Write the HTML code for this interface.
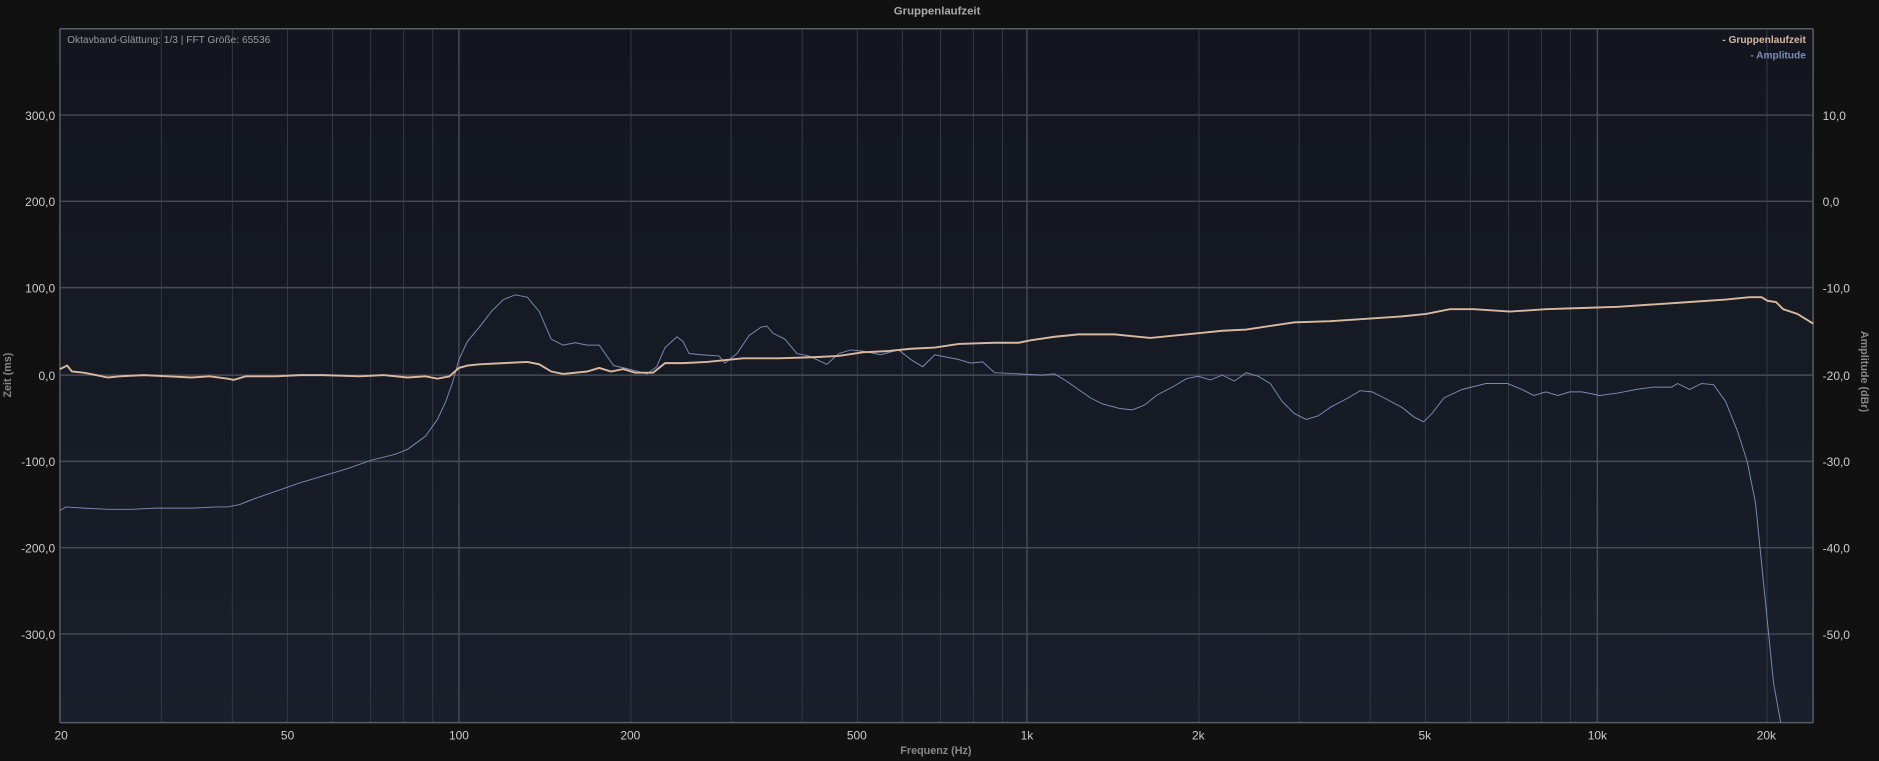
<!DOCTYPE html>
<html><head><meta charset="utf-8"><style>
html,body{margin:0;padding:0;background:#111111;overflow:hidden}
svg{display:block}
text{font-family:"Liberation Sans",sans-serif}
</style></head><body>
<svg width="1879" height="761" viewBox="0 0 1568 635" preserveAspectRatio="none" xmlns="http://www.w3.org/2000/svg">
<defs><linearGradient id="bg" x1="0" y1="0" x2="0" y2="1"><stop offset="0" stop-color="#13161e"/><stop offset="1" stop-color="#1a1f2b"/></linearGradient></defs>
<rect width="1568" height="635" fill="#111111"/>
<rect x="50" y="24" width="1463" height="579" fill="url(#bg)"/>
<g stroke="#343a44" stroke-width="0.8">
<line x1="134.6" y1="24" x2="134.6" y2="603"/><line x1="193.9" y1="24" x2="193.9" y2="603"/><line x1="239.9" y1="24" x2="239.9" y2="603"/><line x1="277.5" y1="24" x2="277.5" y2="603"/><line x1="309.3" y1="24" x2="309.3" y2="603"/><line x1="336.8" y1="24" x2="336.8" y2="603"/><line x1="361.1" y1="24" x2="361.1" y2="603"/>
<line x1="526.5" y1="24" x2="526.5" y2="603"/><line x1="610.1" y1="24" x2="610.1" y2="603"/><line x1="669.4" y1="24" x2="669.4" y2="603"/><line x1="715.4" y1="24" x2="715.4" y2="603"/><line x1="753" y1="24" x2="753" y2="603"/><line x1="784.8" y1="24" x2="784.8" y2="603"/><line x1="812.3" y1="24" x2="812.3" y2="603"/><line x1="836.6" y1="24" x2="836.6" y2="603"/>
<line x1="1000.5" y1="24" x2="1000.5" y2="603"/><line x1="1084.1" y1="24" x2="1084.1" y2="603"/><line x1="1143.4" y1="24" x2="1143.4" y2="603"/><line x1="1189.4" y1="24" x2="1189.4" y2="603"/><line x1="1227" y1="24" x2="1227" y2="603"/><line x1="1258.8" y1="24" x2="1258.8" y2="603"/><line x1="1286.3" y1="24" x2="1286.3" y2="603"/><line x1="1310.6" y1="24" x2="1310.6" y2="603"/>
<line x1="1474.5" y1="24" x2="1474.5" y2="603"/>
</g>
<g stroke="#474c54" stroke-width="1.2">
<line x1="383" y1="24" x2="383" y2="603"/><line x1="857" y1="24" x2="857" y2="603"/><line x1="1333" y1="24" x2="1333" y2="603"/>
<line x1="50" y1="96" x2="1513" y2="96"/><line x1="50" y1="168" x2="1513" y2="168"/><line x1="50" y1="240" x2="1513" y2="240"/><line x1="50" y1="313" x2="1513" y2="313"/><line x1="50" y1="385" x2="1513" y2="385"/><line x1="50" y1="457" x2="1513" y2="457"/><line x1="50" y1="529" x2="1513" y2="529"/>
</g>
<rect x="50" y="24" width="1463" height="579" fill="none" stroke="#5a5e64" stroke-width="1.2" rx="1"/>
<polyline fill="none" stroke="#7d8bb5" stroke-width="0.8" points="50,426 55,423 70,424 90,425 110,425 130,424 160,424 180,423 190,423 200,421 210,417 230,410 250,403 270,397 290,391 310,384 330,379 340,375 355,364 365,350 372,335 378,318 383,300 390,285 400,273 410,260 420,250 430,246 440,248 450,260 460,283 470,288 480,286 490,288 500,288 505,295 512,305 525,308 540,312 548,306 555,290 565,281 570,285 575,295 585,296 600,297 605,303 615,295 625,280 635,273 640,272 645,278 655,283 665,295 675,297 690,304 700,295 710,292 720,293 735,296 750,292 760,300 770,306 780,296 790,298 800,300 810,303 820,302 830,311 850,312 870,313 880,312 890,318 900,325 910,332 920,337 935,341 945,342 955,338 965,330 980,322 990,316 1000,314 1010,317 1020,313 1030,318 1040,311 1050,314 1060,320 1070,335 1080,345 1090,350 1100,347 1110,340 1125,332 1135,326 1145,327 1155,332 1170,340 1180,348 1188,352 1195,345 1205,332 1220,325 1240,320 1258,320 1270,325 1280,330 1290,327 1300,330 1310,327 1320,327 1335,330 1350,328 1365,325 1380,323 1395,323 1400,320 1410,325 1420,320 1430,321 1440,335 1450,360 1458,385 1465,420 1470,470 1475,520 1480,570 1486,603"/>
<polyline fill="none" stroke="#d8b9a0" stroke-width="1.6" points="50,308 56,305 60,310 70,311 80,313 90,315 100,314 120,313 140,314 160,315 175,314 190,316 195,317 205,314 230,314 250,313 270,313 300,314 320,313 340,315 355,314 365,316 375,314 383,307 390,305 400,304 420,303 440,302 450,304 460,310 470,312 490,310 500,307 510,310 520,308 530,311 545,311 555,303 570,303 590,302 620,299 650,299 680,298 700,297 720,294 740,293 760,291 780,290 800,287 830,286 850,286 860,284 880,281 900,279 930,279 960,282 980,280 1000,278 1020,276 1040,275 1060,272 1080,269 1110,268 1140,266 1170,264 1190,262 1210,258 1230,258 1260,260 1290,258 1320,257 1350,256 1380,254 1410,252 1440,250 1460,248 1470,248 1475,251 1482,252 1488,258 1500,262 1513,270"/>
<text x="782" y="12" fill="#aaaaaa" font-size="9.5" font-weight="bold" text-anchor="middle">Gruppenlaufzeit</text>
<text x="56" y="36" fill="#9a9a9a" font-size="8.5">Oktavband-Glättung: 1/3 | FFT Größe: 65536</text>
<text x="1507" y="36" fill="#d8b9a0" font-size="8.5" font-weight="bold" text-anchor="end">- Gruppenlaufzeit</text>
<text x="1507" y="49" fill="#7d8bb5" font-size="8.5" font-weight="bold" text-anchor="end">- Amplitude</text>
<g fill="#cccccc" font-size="10" text-anchor="end">
<text x="46" y="100">300,0</text><text x="46" y="172">200,0</text><text x="46" y="244">100,0</text><text x="46" y="317">0,0</text><text x="46" y="389">-100,0</text><text x="46" y="461">-200,0</text><text x="46" y="533">-300,0</text>
</g>
<g fill="#cccccc" font-size="10">
<text x="1521" y="100">10,0</text><text x="1521" y="172">0,0</text><text x="1521" y="244">-10,0</text><text x="1521" y="317">-20,0</text><text x="1521" y="389">-30,0</text><text x="1521" y="461">-40,0</text><text x="1521" y="533">-50,0</text>
</g>
<g fill="#cccccc" font-size="10" text-anchor="middle">
<text x="51" y="617">20</text><text x="240" y="617">50</text><text x="383" y="617">100</text><text x="526" y="617">200</text><text x="715" y="617">500</text><text x="857" y="617">1k</text><text x="1000" y="617">2k</text><text x="1189" y="617">5k</text><text x="1333" y="617">10k</text><text x="1474" y="617">20k</text>
</g>
<text x="781" y="629" fill="#888888" font-size="9" font-weight="bold" text-anchor="middle">Frequenz (Hz)</text>
<text transform="translate(9,313) rotate(-90)" fill="#888888" font-size="9" font-weight="bold" text-anchor="middle">Zeit (ms)</text>
<text transform="translate(1553,310) rotate(90)" fill="#888888" font-size="9" font-weight="bold" text-anchor="middle">Amplitude (dBr)</text>
</svg>
</body></html>
